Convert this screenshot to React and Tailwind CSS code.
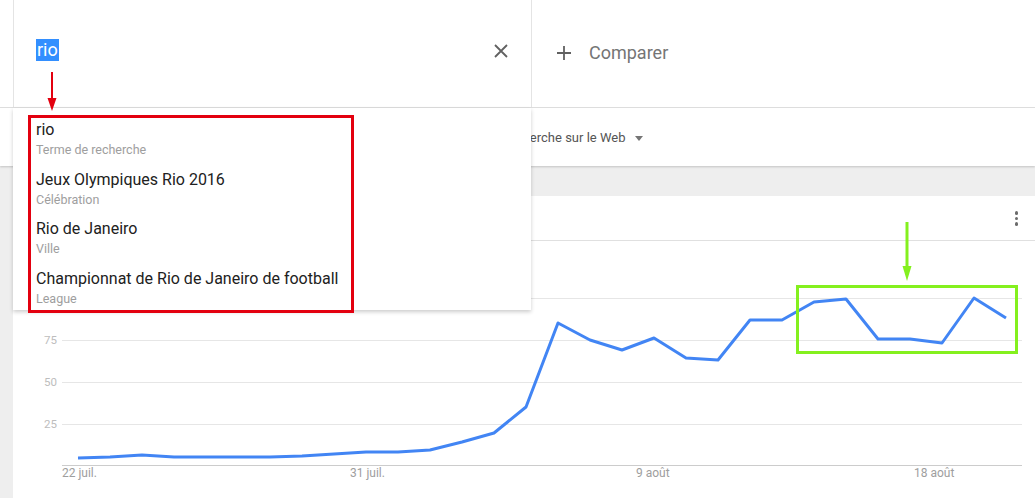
import React from 'react'

const suggestions = [
  { title: 'rio', type: 'Terme de recherche' },
  { title: 'Jeux Olympiques Rio 2016', type: 'Célébration' },
  { title: 'Rio de Janeiro', type: 'Ville' },
  { title: 'Championnat de Rio de Janeiro de football', type: 'League' },
]

// interest over time, one value per day (22 juil. -> 20 août), in page pixels
const points = [
  458, 457, 455, 457, 457, 457, 457, 456, 454, 452, 452, 450, 442, 433, 407,
  323, 340, 350, 338, 358, 360, 320, 320, 302, 299, 339, 339, 343, 298, 318,
]

const OX = 13
const OY = 241

function TrendChart() {
  const path = points
    .map((y, i) => `${i === 0 ? 'M' : 'L'}${78 + 32 * i - OX} ${y - OY}`)
    .join(' ')
  const grid = [
    { y: 298, label: '' },
    { y: 340, label: '75' },
    { y: 382, label: '50' },
    { y: 424, label: '25' },
  ]
  const dates = [
    { x: 62, label: '22 juil.' },
    { x: 350, label: '31 juil.' },
    { x: 636, label: '9 août' },
    { x: 914, label: '18 août' },
  ]
  return (
    <svg width="1022" height="257" className="block">
      {grid.map((g) => (
        <g key={g.y}>
          <line x1={62 - OX} x2={1022 - OX} y1={g.y - OY + 0.5} y2={g.y - OY + 0.5} stroke="#e6e6e6" strokeWidth="1" />
          {g.label && (
            <text x={57 - OX} y={g.y - OY + 4} textAnchor="end" fontSize="11.5" fill="#bdbdbd" fontFamily="Roboto, sans-serif">
              {g.label}
            </text>
          )}
        </g>
      ))}
      <line x1={62 - OX} x2={1022 - OX} y1={465 - OY + 0.5} y2={465 - OY + 0.5} stroke="#cccccc" strokeWidth="1" />
      {dates.map((d) => (
        <text key={d.label} x={d.x - OX} y={477 - OY} fontSize="12" fill="#9e9e9e" fontFamily="Roboto, sans-serif">
          {d.label}
        </text>
      ))}
      <path d={path} fill="none" stroke="#4285f4" strokeWidth="3" strokeLinejoin="round" />
    </svg>
  )
}

export default function App() {
  return (
    <div className="relative w-[1035px] h-[498px] overflow-hidden bg-[#eeeeee] font-['Roboto',sans-serif]">
      {/* Header */}
      <header className="h-[108px] bg-white border-b border-[#e0e0e0] flex">
        <div className="w-[13px]" />
        <div className="w-[519px] border-x border-[#e4e4e4] flex items-start justify-between pl-[22px] pr-[23px] pt-[39px]">
          <span className="bg-[#338fff] text-white text-[18px] leading-[22px] px-[1px]">rio</span>
          <svg width="14" height="14" viewBox="0 0 14 14" className="mt-[5px]">
            <path d="M1 1 L13 13 M13 1 L1 13" stroke="#616161" strokeWidth="1.8" />
          </svg>
        </div>
        <div className="flex items-center pl-[25px] gap-[18px] text-[#757575] pb-[2px]">
          <svg width="14" height="14" viewBox="0 0 14 14">
            <path d="M7 0 V14 M0 7 H14" stroke="#616161" strokeWidth="1.8" />
          </svg>
          <span className="text-[18px]">Comparer</span>
        </div>
      </header>

      {/* Filters row */}
      <div className="h-[58px] bg-white shadow-[0_1px_2px_rgba(0,0,0,0.18)] flex items-center pl-[501px] pt-[2px]">
        <span className="text-[13px] text-[#555555]">Recherche sur le Web</span>
        <svg width="8" height="5" viewBox="0 0 8 5" className="ml-[10px]">
          <path d="M0 0 H8 L4 5 Z" fill="#757575" />
        </svg>
      </div>

      <div className="h-[30px]" />

      {/* Chart card */}
      <div className="ml-[13px] bg-white h-[302px]">
        <div className="h-[45px] border-b border-[#e0e0e0] flex justify-end items-start pt-[15px] pr-[17px]">
          <div className="flex flex-col gap-[2px]">
            <span className="w-[3.5px] h-[3.5px] rounded-full bg-[#6b6b6b]" />
            <span className="w-[3.5px] h-[3.5px] rounded-full bg-[#6b6b6b]" />
            <span className="w-[3.5px] h-[3.5px] rounded-full bg-[#6b6b6b]" />
          </div>
        </div>
        <TrendChart />
      </div>

      {/* Suggestions dropdown */}
      <div className="absolute left-[13px] top-[108px] w-[518px] h-[202px] bg-white shadow-[0_2px_4px_rgba(0,0,0,0.2)] pt-[11px] pl-[23px] flex flex-col gap-[9.5px]">
        {suggestions.map((s) => (
          <div key={s.title}>
            <div className="text-[16px] leading-[22px] text-[#212121]">{s.title}</div>
            <div className="text-[12.5px] leading-[18px] text-[#9e9e9e]">{s.type}</div>
          </div>
        ))}
      </div>

      {/* Annotations */}
      <div className="absolute left-[28px] top-[115px] w-[326px] h-[198px] border-[3px] border-[#e3000f]" />
      <div className="absolute left-[796px] top-[285px] w-[222px] h-[69px] border-[3px] border-[#84f01e]" />
      <svg className="absolute left-0 top-0 pointer-events-none" width="1035" height="498">
        <path d="M52 72 V100" stroke="#e3000f" strokeWidth="2" />
        <path d="M47.5 98 H56.5 L52 111 Z" fill="#e3000f" />
        <path d="M907 222 V268" stroke="#84f01e" strokeWidth="3" />
        <path d="M902.5 266 H911.5 L907 281 Z" fill="#84f01e" />
      </svg>
    </div>
  )
}
